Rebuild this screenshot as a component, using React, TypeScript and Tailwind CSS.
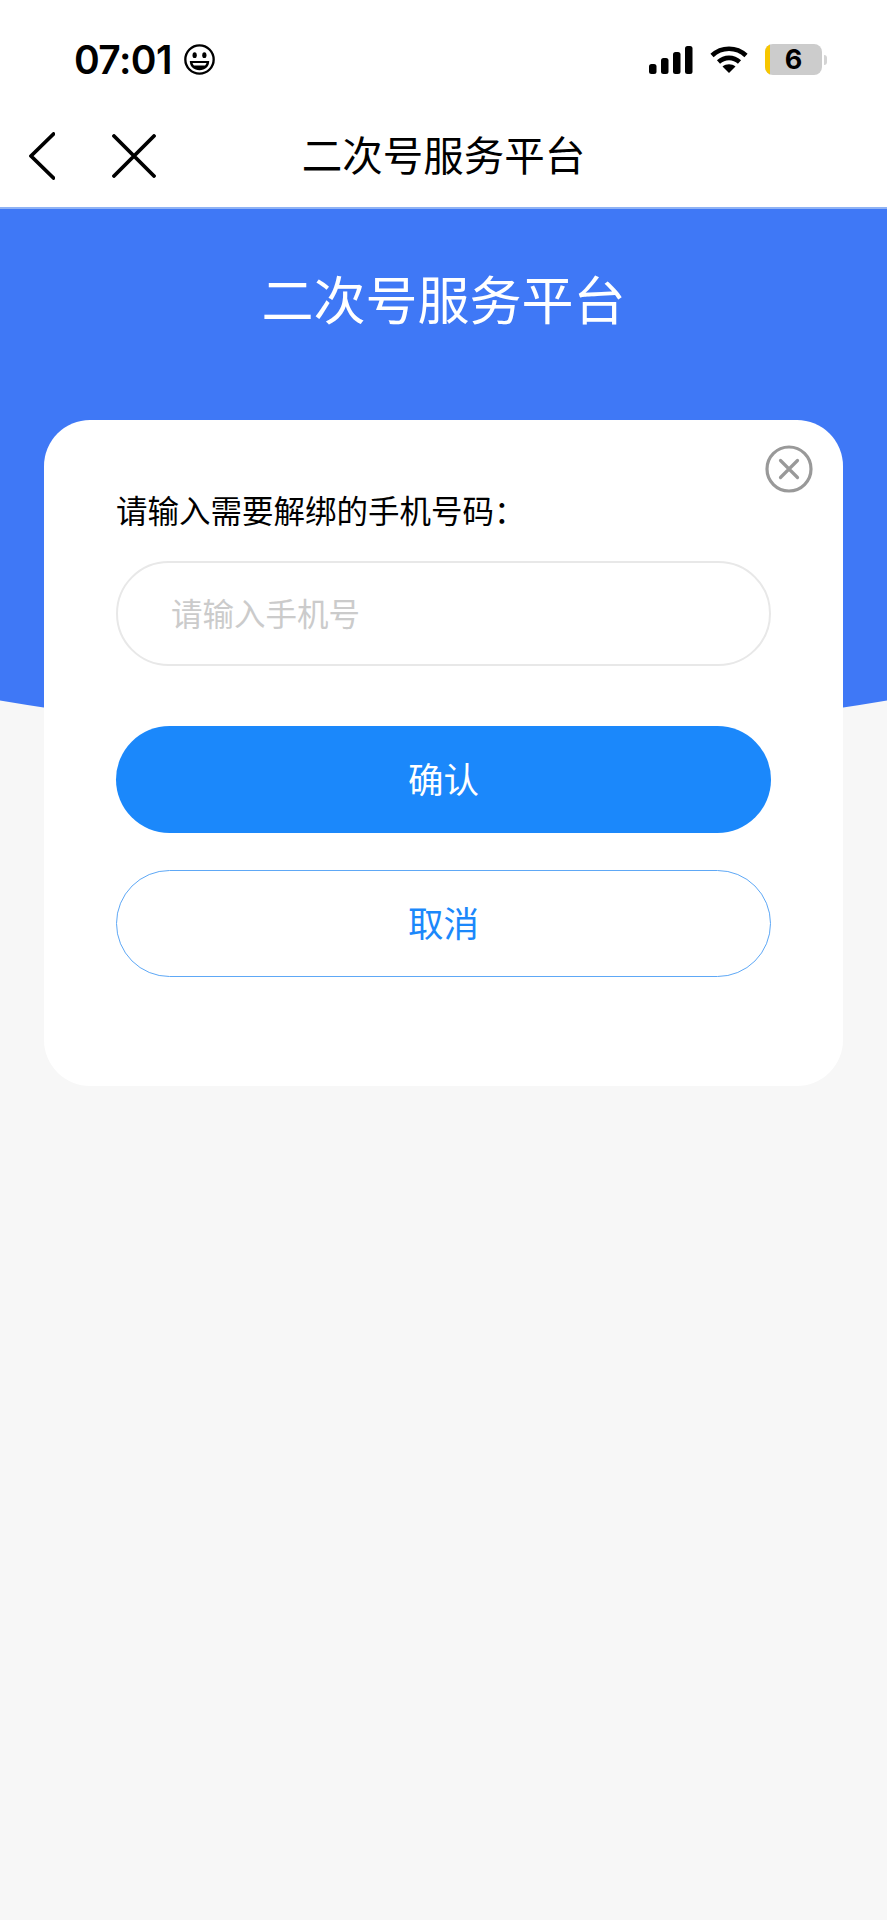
const CJK = 'font-["Noto_Sans_CJK_SC","Noto_Sans",sans-serif]'

function SmileIcon() {
  return (
    <svg width="33" height="33" viewBox="0 0 34 34" fill="none">
      <circle cx="17" cy="17" r="14.6" stroke="#000" strokeWidth="2.4" />
      <ellipse cx="12" cy="12.5" rx="2.2" ry="3" fill="#000" />
      <ellipse cx="22" cy="12.5" rx="2.2" ry="3" fill="#000" />
      <path d="M7 18.5h20c0 6-4.4 9.500-10 9.500S7 24.500 7 18.500z" fill="#000" />
      <path d="M9.800 20.500h14.400c-.4 1.200-.9 2-1.500 2.700H11.300c-.6-.7-1.100-1.500-1.500-2.700z" fill="#fff" />
    </svg>
  )
}

function SignalIcon() {
  return (
    <svg width="44" height="28" viewBox="0 0 44 28" fill="#000">
      <rect x="0" y="18" width="7.500" height="10" rx="2.500" />
      <rect x="12" y="12" width="7.500" height="16" rx="2.500" />
      <rect x="24" y="6" width="7.500" height="22" rx="2.500" />
      <rect x="36" y="0" width="7.500" height="28" rx="2.500" />
    </svg>
  )
}

function WifiIcon() {
  return (
    <svg width="38" height="27" viewBox="0 0 38 27" fill="none" stroke="#000" strokeWidth="4.600">
      <path d="M2 9.500C11.500 .5 26.500 .5 36 9.500" />
      <path d="M8.500 16c6-5.500 15-5.500 21 0" />
      <path d="M19 27l-6.500-6.500c3.600-3 9.400-3 13 0z" fill="#000" stroke="none" />
    </svg>
  )
}

function BatteryIcon() {
  return (
    <div className="flex items-center gap-[2px]">
      <div className="relative flex h-[31px] w-[57px] overflow-hidden rounded-[8px] bg-[#cccccc]">
        <div className="h-full w-[5px] bg-[#f7c600]" />
        <span className="absolute inset-0 flex items-center justify-center font-['Inter',sans-serif] text-[27px] leading-none font-bold text-black">
          6
        </span>
      </div>
      <div className="h-[10px] w-[3px] rounded-r-full bg-[#d4d4d4]" />
    </div>
  )
}

function StatusBar() {
  return (
    <div className="flex h-[90px] items-center justify-between pt-[29px] pr-[60px] pl-[74px]">
      <div className="flex items-center gap-[11px]">
        <span className="font-['Inter',sans-serif] text-[39px] leading-none font-semibold tracking-[-0.6px] text-black">
          07:01
        </span>
        <SmileIcon />
      </div>
      <div className="flex items-center gap-[17px]">
        <SignalIcon />
        <WifiIcon />
        <BatteryIcon />
      </div>
    </div>
  )
}

function NavBar() {
  return (
    <div className="relative flex h-[119px] items-center border-b-2 border-[#8fb2f4] bg-white pt-[17px] pb-[2px] pl-[29px]">
      <svg width="26" height="48" viewBox="0 0 26 48" fill="none" stroke="#000" strokeWidth="3.800" strokeLinecap="round" strokeLinejoin="round">
        <path d="M24.500 2 2 24l22.500 22" />
      </svg>
      <svg className="ml-[57px]" width="44" height="44" viewBox="0 0 44 44" fill="none" stroke="#000" strokeWidth="3.800" strokeLinecap="round">
        <path d="M2 2l40 40M42 2 2 42" />
      </svg>
      <span className={`${CJK} absolute inset-x-0 top-[39px] text-center text-[40.500px] leading-[50px] text-black`}>
        二次号服务平台
      </span>
    </div>
  )
}

export default function App() {
  return (
    <div className={`${CJK} min-h-[1920px] w-[887px] bg-[#f7f7f7]`}>
      <div className="bg-white">
        <StatusBar />
        <NavBar />
      </div>
      <div className="h-[529px] bg-[#3f78f6] pt-[57px] text-center text-[52px] leading-[64px] text-white [clip-path:circle(2646px_at_50%_-2117px)]">
        二次号服务平台
      </div>
      <div className="relative z-10 mx-[44px] -mt-[318px] rounded-[46px] bg-white px-[72px] pt-[69px] pb-[109px]">
        <button type="button" className="absolute top-[25px] right-[30px]">
          <svg className="block" width="48" height="48" viewBox="0 0 48 48" fill="none" stroke="#999999" strokeWidth="3.200">
            <circle cx="24" cy="24" r="22" />
            <path d="M15.500 15.500l17 17M32.500 15.500l-17 17" strokeLinecap="round" />
          </svg>
        </button>
        <div className="text-[31.500px] leading-[40px] text-black">请输入需要解绑的手机号码：</div>
        <input
          placeholder="请输入手机号"
          className="mt-[32px] block h-[105px] w-full rounded-full border-[2.500px] border-[#e8e8e8] pr-[40px] pb-[4px] pl-[53px] text-[31.500px] outline-none placeholder:text-[#cbcbcb]"
        />
        <button type="button" className="mt-[60px] block h-[107px] w-full rounded-full bg-[#1b88fb] pb-[4px] text-[35.500px] text-white">
          确认
        </button>
        <button type="button" className="mt-[37px] block h-[107px] w-full rounded-full border border-[#5ea8f6] bg-white pb-[4px] text-[35.500px] text-[#1b88fb]">
          取消
        </button>
      </div>
    </div>
  )
}
